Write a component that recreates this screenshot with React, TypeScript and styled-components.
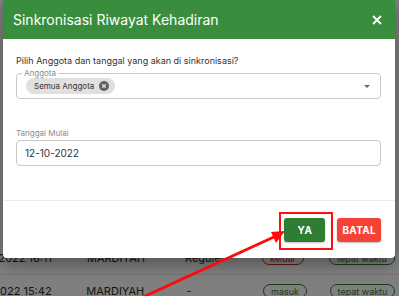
import React from 'react';
import styled, { createGlobalStyle } from 'styled-components';

const GlobalStyle = createGlobalStyle`
  html, body {
    margin: 0;
    padding: 0;
    width: 399px;
    height: 296px;
    overflow: hidden;
    font-family: Inter, "Noto Sans", sans-serif;
  }
`;

const Page = styled.div`
  position: relative;
  width: 399px;
  height: 296px;
  background: #ffffff;
  overflow: hidden;
`;

const Table = styled.div`
  display: flex;
  flex-direction: column;
  padding-top: 242px;
`;

const Row = styled.div`
  display: flex;
  align-items: center;
  height: 32px;
  border-bottom: 1px solid #e6e6e6;
  font-size: 11px;
  color: #2a2a2a;
`;

const DateCell = styled.div`
  display: flex;
  justify-content: flex-end;
  width: 52px;
  overflow: hidden;
  white-space: nowrap;
`;

const Cell = styled.div<{ w: number }>`
  width: ${p => p.w}px;
  white-space: nowrap;
`;

const Tag = styled.span<{ tone: string }>`
  display: inline-block;
  padding: 0 7px;
  height: 14px;
  line-height: 13px;
  font-size: 9px;
  border-radius: 8px;
  border: 1px solid ${p => p.tone};
  color: ${p => p.tone};
  box-sizing: border-box;
`;

const Backdrop = styled.div`
  position: absolute;
  inset: 0;
  background: rgba(0, 0, 0, 0.5);
`;

const Dialog = styled.div`
  position: absolute;
  left: 3px;
  top: 0;
  width: 392px;
  background: #fff;
  border-radius: 0 0 4px 4px;
  box-shadow: 0 6px 16px rgba(0, 0, 0, 0.35);
  display: flex;
  flex-direction: column;
`;

const Header = styled.div`
  height: 39px;
  background: #388e3c;
  display: flex;
  align-items: center;
  justify-content: space-between;
  padding: 0 13px 0 10px;
  color: #fff;
`;

const Title = styled.div`
  font-size: 14px;
`;

const Body = styled.div`
  display: flex;
  flex-direction: column;
  padding: 15px 14px 34px 13px;
  border-bottom: 1px solid #ececec;
`;

const Prompt = styled.div`
  font-size: 9px;
  color: #333;
  line-height: 14px;
`;

const Outlined = styled.div`
  position: relative;
  margin-top: 5px;
  height: 24px;
  border: 1px solid #c8c8c8;
  border-radius: 4px;
  display: flex;
  align-items: center;
  justify-content: space-between;
  padding: 0 10px 0 9px;
`;

const Legend = styled.span`
  position: absolute;
  top: -6px;
  left: 5px;
  padding: 0 2px;
  background: #fff;
  font-size: 8px;
  line-height: 10px;
  color: #8a8a8a;
`;

const Chip = styled.span`
  display: inline-flex;
  align-items: center;
  gap: 5px;
  height: 16px;
  padding: 0 6px 0 8px;
  border-radius: 8px;
  background: #e0e0e0;
  font-size: 8px;
  color: #333;
`;

const Caret = styled.span`
  width: 0;
  height: 0;
  border-left: 3.5px solid transparent;
  border-right: 3.5px solid transparent;
  border-top: 3.5px solid #666;
`;

const FieldLabel = styled.div`
  margin-top: 29px;
  font-size: 8px;
  color: #8a8a8a;
  line-height: 11px;
`;

const Input = styled.div`
  margin-top: 1px;
  height: 24px;
  border: 1px solid #c8c8c8;
  border-radius: 4px;
  display: flex;
  align-items: center;
  padding: 0 8px;
  font-size: 10px;
  color: #333;
`;

const Footer = styled.div`
  display: flex;
  justify-content: flex-end;
  align-items: center;
  gap: 4px;
  height: 57px;
  padding-right: 14px;
`;

const Highlight = styled.div`
  border: 2px solid #ff1010;
  padding: 4px 6px 6px 3px;
  margin-top: 2px;
`;

const Button = styled.button<{ bg: string }>`
  height: 24px;
  border: none;
  border-radius: 3px;
  background: ${p => p.bg};
  color: #fff;
  font-family: Inter, "Noto Sans", sans-serif;
  font-weight: 700;
  font-size: 10px;
  letter-spacing: 0.3px;
  padding: 0 5px;
  box-shadow: 0 1px 2px rgba(0, 0, 0, 0.25);
`;

const Arrow = styled.svg`
  position: absolute;
  left: 0;
  top: 0;
  pointer-events: none;
`;

const rows = [
  { date: '12-10-2022 16:11', name: 'MARDIYAH', type: 'Reguler', state: 'keluar', stateTone: '#c62828' },
  { date: '12-10-2022 15:42', name: 'MARDIYAH', type: '-', state: 'masuk', stateTone: '#2e7d32' },
];

export default function App() {
  return (
    <Page>
      <GlobalStyle />
      <Table>
        {rows.map((r, i) => (
          <Row key={i}>
            <DateCell>{r.date}</DateCell>
            <Cell w={35} />
            <Cell w={98}>{r.name}</Cell>
            <Cell w={77} style={{ paddingLeft: r.type === '-' ? 3 : 0 }}>{r.type}</Cell>
            <Cell w={67}>
              <Tag tone={r.stateTone}>{r.state}</Tag>
            </Cell>
            <Cell w={70}>
              <Tag tone="#2e7d32">tepat waktu</Tag>
            </Cell>
          </Row>
        ))}
      </Table>
      <Backdrop />
      <Dialog>
        <Header>
          <Title>Sinkronisasi Riwayat Kehadiran</Title>
          <svg width="10" height="10" viewBox="0 0 10 10">
            <path d="M1 1 L9 9 M9 1 L1 9" stroke="#fff" strokeWidth="1.8" />
          </svg>
        </Header>
        <Body>
          <Prompt>Pilih Anggota dan tanggal yang akan di sinkronisasi?</Prompt>
          <Outlined>
            <Legend>Anggota</Legend>
            <Chip>
              Semua Anggota
              <svg width="10" height="10" viewBox="0 0 10 10">
                <circle cx="5" cy="5" r="5" fill="#5f5f5f" />
                <path d="M3.2 3.2 L6.8 6.8 M6.8 3.2 L3.2 6.8" stroke="#e0e0e0" strokeWidth="1.3" />
              </svg>
            </Chip>
            <Caret />
          </Outlined>
          <FieldLabel>Tanggal Mulai</FieldLabel>
          <Input>12-10-2022</Input>
        </Body>
        <Footer>
          <Highlight>
            <Button bg="#2e7d32" style={{ width: 41 }}>YA</Button>
          </Highlight>
          <Button bg="#f44336">BATAL</Button>
        </Footer>
      </Dialog>
      <Arrow width="399" height="296" viewBox="0 0 399 296">
        <line x1="143" y1="297" x2="276" y2="236" stroke="#ff0a0a" strokeWidth="3" />
        <polygon points="285,231 271,232 276,243" fill="#ff0a0a" />
      </Arrow>
    </Page>
  );
}
